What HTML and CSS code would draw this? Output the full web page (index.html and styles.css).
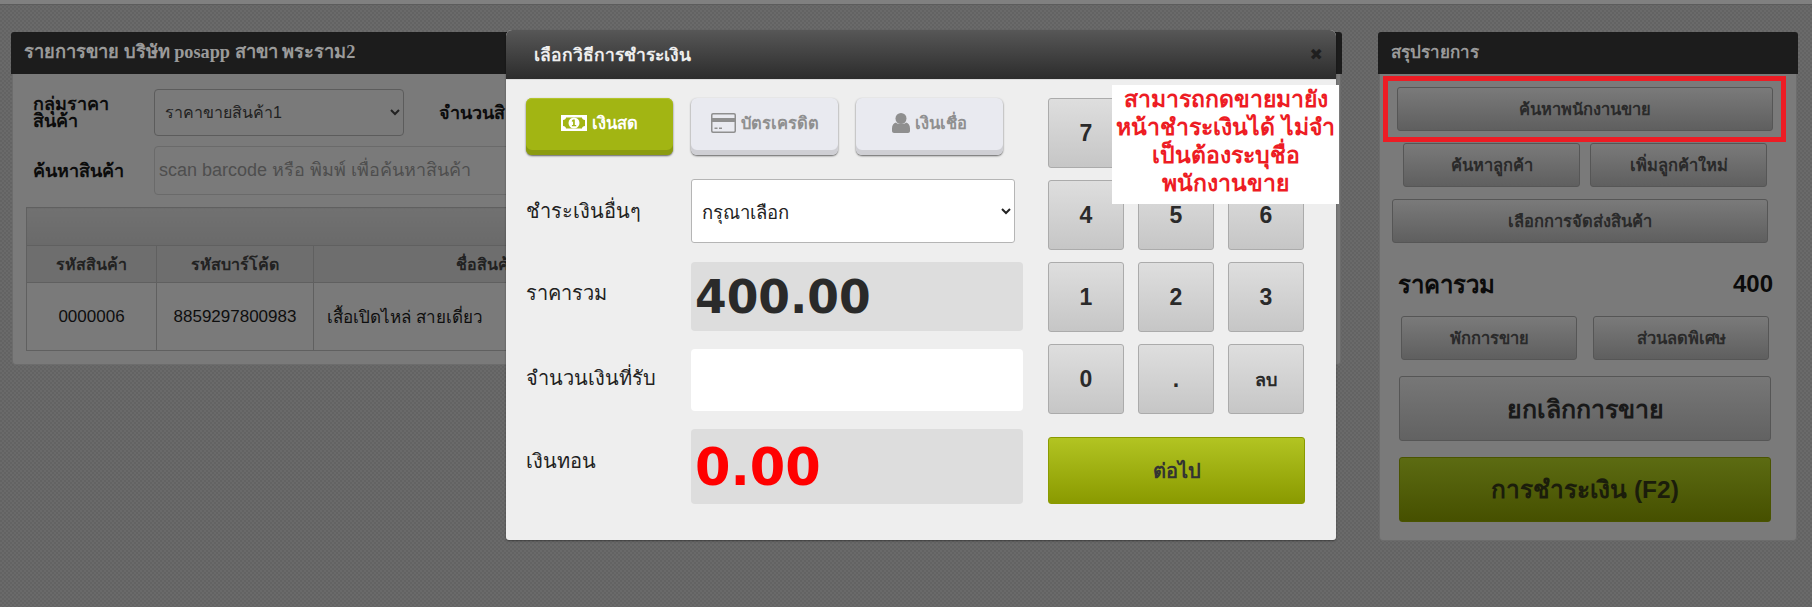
FILE: index.html
```html
<!DOCTYPE html>
<html lang="th">
<head>
    <meta charset="UTF-8">
    <meta name="viewport" content="width=device-width, initial-scale=1.0">
    <title>POS</title>
    <link rel="stylesheet" href="styles.css">
</head>
<body>
    <div class="topbar"></div>

    <div class="page">
        <section class="panel sale-panel">
            <h2 class="panel-head serif">รายการขาย บริษัท posapp สาขา พระราม2</h2>
            <div class="panel-body">
                <div class="form-row price-row">
                    <label class="form-label tight">กลุ่มราคา<br>สินค้า</label>
                    <select class="price-select">
                        <option>ราคาขายสินค้า1</option>
                    </select>
                    <label class="form-label qty-label">จำนวนสิ</label>
                </div>
                <div class="form-row search-row">
                    <label class="form-label">ค้นหาสินค้า</label>
                    <input class="search-input" type="text" placeholder="scan barcode หรือ พิมพ์ เพื่อค้นหาสินค้า">
                </div>
                <table class="sale-table">
                    <colgroup>
                        <col class="col-code">
                        <col class="col-barcode">
                        <col class="col-name">
                        <col>
                    </colgroup>
                    <tr class="blank-row"><th colspan="4"></th></tr>
                    <tr class="head-row">
                        <th>รหัสสินค้า</th>
                        <th>รหัสบาร์โค้ด</th>
                        <th>ชื่อสินค้า</th>
                        <th></th>
                    </tr>
                    <tr class="data-row">
                        <td>0000006</td>
                        <td>8859297800983</td>
                        <td class="name-cell">เสื้อเปิดไหล่ สายเดี่ยว</td>
                        <td></td>
                    </tr>
                </table>
            </div>
        </section>

        <aside class="panel summary-panel">
            <h2 class="panel-head">สรุปรายการ</h2>
            <div class="panel-body summary-body">
                <button class="dim-btn staff-btn">ค้นหาพนักงานขาย</button>
                <div class="btn-row customer-row">
                    <button class="dim-btn">ค้นหาลูกค้า</button>
                    <button class="dim-btn">เพิ่มลูกค้าใหม่</button>
                </div>
                <button class="dim-btn ship-btn">เลือกการจัดส่งสินค้า</button>
                <div class="total-line">
                    <span class="total-label">ราคารวม</span>
                    <span class="total-value">400</span>
                </div>
                <div class="btn-row hold-row">
                    <button class="dim-btn">พักการขาย</button>
                    <button class="dim-btn">ส่วนลดพิเศษ</button>
                </div>
                <button class="dim-btn big-btn cancel-btn">ยกเลิกการขาย</button>
                <button class="dim-btn big-btn pay-btn">การชำระเงิน (F2)</button>
            </div>
        </aside>
    </div>

    <!-- payment popup -->
    <div class="modal">
        <div class="modal-head">
            <span class="modal-title">เลือกวิธีการชำระเงิน</span>
            <span class="modal-close">&#10006;</span>
        </div>
        <div class="modal-body">
            <div class="modal-left">
                <div class="pay-types">
                    <button class="pay-type active">
                        <svg class="pay-icon" width="26" height="18" viewBox="0 0 26 18">
                            <path fill="#fff" fill-rule="evenodd" d="M0 1h26v16H0zM5 3.500C5 5 3.700 6 2 6v6c1.700 0 3 1 3 2.500h16C21 13 22.300 12 24 12V6c-1.700 0-3-1-3-2.500z"/>
                            <circle cx="13" cy="9" r="5.500" fill="#fff"/>
                            <path fill="#a2b513" d="M12 5.500h1.800V11H15.200v1.300h-4.300V11h1.200V7.300l-1.200.6V6.600z"/>
                        </svg>
                        เงินสด
                    </button>
                    <button class="pay-type">
                        <svg class="pay-icon" width="25" height="20" viewBox="0 0 25 20">
                            <path fill="#8f8f8f" fill-rule="evenodd" d="M2 0h21a2 2 0 0 1 2 2v16a2 2 0 0 1-2 2H2a2 2 0 0 1-2-2V2a2 2 0 0 1 2-2zM1.500 9v9l.5.500h21l.5-.5V9zM1.500 2v3h22V2l-.5-.5H2z"/>
                            <path fill="#8f8f8f" d="M3.500 14.500h3V16h-3zM8 14.500h3V16H8z"/>
                        </svg>
                        บัตรเครดิต
                    </button>
                    <button class="pay-type">
                        <svg class="pay-icon" width="18" height="20" viewBox="0 0 18 20">
                            <circle cx="9" cy="5.500" r="5.500" fill="#8f8f8f"/>
                            <path fill="#8f8f8f" d="M4 9.500C5.500 11.500 12.500 11.500 14 9.500c2.500.5 4 2.500 4 6v2.500c0 1-1 2-2 2H2c-1 0-2-1-2-2v-2.500c0-3.500 1.500-5.500 4-6z"/>
                        </svg>
                        เงินเชื่อ
                    </button>
                </div>
                <div class="pay-row other-row">
                    <label class="pay-label">ชำระเงินอื่นๆ</label>
                    <select class="other-select">
                        <option>กรุณาเลือก</option>
                    </select>
                </div>
                <div class="pay-row sum-row">
                    <label class="pay-label">ราคารวม</label>
                    <div class="amount-box">400.00</div>
                </div>
                <div class="pay-row received-row">
                    <label class="pay-label">จำนวนเงินที่รับ</label>
                    <input class="received-input" type="text">
                </div>
                <div class="pay-row change-row">
                    <label class="pay-label">เงินทอน</label>
                    <div class="amount-box change-box">0.00</div>
                </div>
            </div>
            <div class="modal-right">
                <div class="keypad">
                    <button class="key">7</button>
                    <button class="key"></button>
                    <button class="key"></button>
                    <button class="key">4</button>
                    <button class="key">5</button>
                    <button class="key">6</button>
                    <button class="key">1</button>
                    <button class="key">2</button>
                    <button class="key">3</button>
                    <button class="key">0</button>
                    <button class="key">.</button>
                    <button class="key key-del">ลบ</button>
                </div>
                <button class="next-btn">ต่อไป</button>
            </div>
        </div>
    </div>

    <!-- annotation on top of the screenshot -->
    <div class="note">สามารถกดขายมายัง<br>หน้าชำระเงินได้ ไม่จำ<br>เป็นต้องระบุชื่อ<br>พนักงานขาย</div>
    <div class="red-box"></div>
</body>
</html>
```

FILE: styles.css
```css
html, body {
    margin: 0;
    height: 607px;
    overflow: hidden;
}
body {
    position: relative;
    font-family: "Liberation Sans", "Noto Sans", sans-serif;
    color: #111;
    background: repeating-conic-gradient(#6a6a6a 0 25%, #636363 0 50%) 0 0 / 4px 4px;
}
button, input, select {
    font-family: inherit;
    box-sizing: border-box;
}
.topbar {
    height: 4px;
    background-color: #808080;
    border-bottom: 1px solid #5c5c5c;
}
.page {
    display: flex;
    align-items: flex-start;
    padding: 27px 14px 0 11px;
    gap: 36px;
}

/* panels behind the popup */
.panel {
    box-sizing: border-box;
}
.sale-panel {
    width: 1331px;
}
.summary-panel {
    width: 420px;
}
.panel-head {
    height: 42px;
    margin: 0;
    padding: 0 13px;
    line-height: 41px;
    font-size: 17px;
    font-weight: bold;
    color: #9a9a9a;
    background-color: #1c1c1c;
    border-radius: 3px 3px 0 0;
}
.panel-head.serif {
    font-family: "Liberation Serif", serif;
    font-size: 18.300px;
}
.panel-body {
    box-sizing: border-box;
    margin: 0 1px;
    background-color: #7a7a7a;
    border: 1px solid #6c6c6c;
    border-top: none;
    border-radius: 0 0 4px 4px;
}
.sale-panel .panel-body {
    height: 291px;
    padding: 15px 13px 0 13px;
}
.form-row {
    display: flex;
    align-items: center;
}
.form-label {
    width: 123px;
    padding-left: 7px;
    box-sizing: border-box;
    font-size: 18px;
    font-weight: bold;
    color: #0c0c0c;
    flex: none;
}
.form-label.tight {
    line-height: 17px;
}
.price-row {
    height: 47px;
}
.price-select {
    width: 250px;
    height: 47px;
    margin-left: 5px;
    padding-left: 6px;
    font-size: 16px;
    color: #222;
    background-color: #7a7a7a;
    border: 1px solid #5c5c5c;
    border-radius: 4px;
}
.form-label.qty-label {
    width: auto;
    padding-left: 35px;
}
.search-row {
    height: 49px;
    margin-top: 10px;
}
.search-input {
    flex: 1;
    height: 49px;
    margin-left: 5px;
    padding: 0 4px;
    font-size: 18px;
    color: #333;
    background-color: #7a7a7a;
    border: 1px solid #6a6a6a;
    border-radius: 4px;
}
.search-input::placeholder {
    color: #4e4e4e;
}
.sale-table {
    width: 100%;
    margin-top: 12px;
    border-collapse: collapse;
    table-layout: fixed;
    font-size: 16px;
}
.sale-table th, .sale-table td {
    padding: 0;
    text-align: center;
    border: 1px solid #606060;
}
.blank-row th {
    height: 37px;
    background: linear-gradient(#717171, #6a6a6a);
}
.head-row th {
    height: 36px;
    font-weight: bold;
    color: #222;
    background-color: #6e6e6e;
}
.col-code { width: 130px; }
.col-barcode { width: 157px; }
.col-name { width: 346px; }
.data-row td {
    height: 67px;
    font-size: 17px;
    color: #0e0e0e;
    background-color: #7a7a7a;
}
.sale-table .name-cell {
    padding-left: 13px;
    text-align: left;
}

/* right side summary */
.summary-body {
    height: 467px;
    padding: 13px 24px 0 12px;
}
.dim-btn {
    display: block;
    height: 44px;
    padding: 0;
    font-size: 16.500px;
    font-weight: bold;
    color: #2a2a2a;
    background: linear-gradient(#7a7a7a, #5f5f5f);
    border: 1px solid #565656;
    border-radius: 3px;
}
.staff-btn {
    width: 376px;
    margin-left: 5px;
}
.btn-row {
    display: flex;
}
.customer-row {
    gap: 10px;
    margin: 12px 0 0 11px;
}
.customer-row .dim-btn {
    width: 177px;
}
.ship-btn {
    width: 376px;
    margin-top: 12px;
}
.total-line {
    display: flex;
    justify-content: space-between;
    align-items: center;
    width: 375px;
    margin: 25px 0 0 6px;
    height: 32px;
    font-weight: bold;
    color: #0b0b0b;
}
.total-label {
    font-size: 24px;
}
.total-value {
    font-size: 24px;
}
.hold-row {
    gap: 16px;
    margin: 16px 0 0 9px;
}
.hold-row .dim-btn {
    width: 176px;
}
.big-btn {
    width: 372px;
    height: 65px;
    margin: 17px 0 0 7px;
    font-size: 25px;
    color: #191919;
    background: linear-gradient(#777, #626262);
}
.big-btn.cancel-btn {
    margin-top: 16px;
}
.big-btn.pay-btn {
    margin-top: 16px;
    font-size: 24.500px;
    color: #1b1d0b;
    border-color: #4a5400;
    background: linear-gradient(#5c6b12, #465000);
}

/* payment popup */
.modal {
    position: absolute;
    left: 506px;
    top: 30px;
    width: 830px;
    height: 510px;
    border-radius: 6px 6px 3px 3px;
    background-color: #eee;
    box-shadow: 0 1px 2px rgba(0,0,0,0.4);
    overflow: hidden;
}
.modal-head {
    box-sizing: border-box;
    height: 50px;
    padding: 0 13px 0 28px;
    display: flex;
    align-items: center;
    justify-content: space-between;
    background: linear-gradient(#575757, #2c2c2c);
    border-bottom: 1px solid #ddd;
}
.modal-title {
    font-size: 17.500px;
    font-weight: bold;
    color: #eee;
}
.modal-close {
    font-size: 16px;
    color: #1f1f1f;
    font-family: "DejaVu Sans", sans-serif;
}
.modal-body {
    display: flex;
    padding: 18px 0 0 20px;
}
.modal-left {
    width: 497px;
}
.pay-types {
    display: flex;
    gap: 18px;
}
.pay-type {
    width: 147px;
    height: 57px;
    padding: 0 0 8px;
    display: flex;
    align-items: center;
    justify-content: center;
    gap: 5px;
    font-size: 16.500px;
    font-weight: bold;
    color: #8f8f8f;
    background-color: #e9eaf0;
    border: none;
    border-radius: 6px;
    box-shadow: inset 0 -5px 0 #cfcfd4, 0 1px 2px rgba(0,0,0,0.6);
}
.pay-type.active {
    color: #fff;
    background-color: #a2b513;
    box-shadow: inset 0 -5px 0 #8b9b10, inset 0 1px 0 #b3c42c, 0 1px 2px rgba(0,0,0,0.6);
}
.pay-icon {
    flex: none;
}
.pay-row {
    display: flex;
    align-items: center;
}
.pay-label {
    width: 165px;
    flex: none;
    font-size: 20px;
    color: #222;
    position: relative;
    top: -4px;
}
.other-row .pay-label {
    top: 0;
}
.received-row .pay-label {
    top: -2px;
}
.change-row .pay-label {
    top: -6px;
}
.other-row {
    margin-top: 24px;
    height: 64px;
}
.other-select {
    width: 324px;
    height: 64px;
    padding: 2px 0 0 6px;
    font-size: 18.500px;
    color: #222;
    background-color: #fff;
    border: 1px solid #b5b5b5;
    border-radius: 3px;
}
.sum-row {
    margin-top: 19px;
    height: 69px;
}
.amount-box {
    box-sizing: border-box;
    width: 332px;
    height: 100%;
    padding-left: 4px;
    font-family: "DejaVu Sans", sans-serif;
    font-size: 45.500px;
    font-weight: bold;
    line-height: 72px;
    color: #2a2a2a;
    background-color: #ddd;
    border-radius: 4px;
}
.received-row {
    margin-top: 18px;
    height: 62px;
}
.received-input {
    width: 332px;
    height: 62px;
    background-color: #fff;
    border: none;
    border-radius: 4px;
}
.change-row {
    margin-top: 18px;
    height: 75px;
}
.amount-box.change-box {
    color: #f00;
    font-size: 51px;
    line-height: 78px;
}
.modal-right {
    margin-left: 25px;
}
.keypad {
    display: grid;
    grid-template-columns: repeat(3, 76px);
    grid-auto-rows: 70px;
    column-gap: 14px;
    row-gap: 12px;
}
.key {
    padding: 0;
    font-size: 23px;
    font-weight: bold;
    color: #2a2a2a;
    background: linear-gradient(#dedede, #c6c6c6);
    border: 1px solid #ababab;
    border-radius: 3px;
}
.key.key-del {
    font-size: 18px;
}
.next-btn {
    display: block;
    width: 257px;
    height: 67px;
    margin-top: 23px;
    font-size: 20px;
    font-weight: bold;
    color: #333;
    background: linear-gradient(#b2c422, #8a9a00);
    border: 1px solid #8a9a00;
    border-radius: 3px;
}

/* annotation */
.note {
    position: absolute;
    left: 1112px;
    top: 85px;
    width: 227px;
    height: 119px;
    box-sizing: border-box;
    background-color: #fff;
    color: #ed1c24;
    font-size: 23px;
    font-weight: bold;
    line-height: 28px;
    text-align: center;
    white-space: nowrap;
}
.red-box {
    position: absolute;
    left: 1383px;
    top: 76px;
    width: 403px;
    height: 66px;
    box-sizing: border-box;
    border: 5px solid #ed1c24;
}
```
